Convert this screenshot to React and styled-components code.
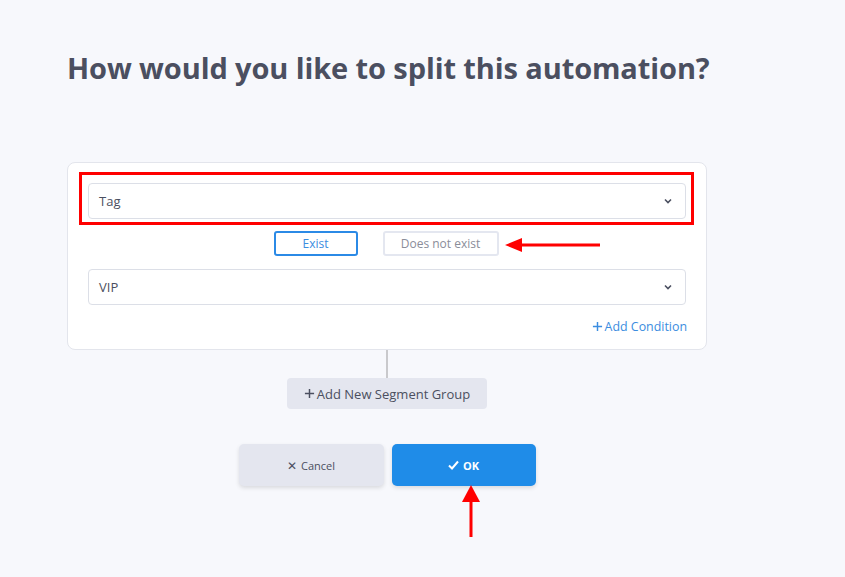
import React from "react";
import styled, { createGlobalStyle } from "styled-components";

const Global = createGlobalStyle`
  html, body { margin: 0; padding: 0; background: #f7f8fc; }
  body { font-family: "Open Sans", "Noto Sans", sans-serif; }
  * { box-sizing: border-box; }
`;

const Page = styled.div`
  position: relative;
  width: 845px;
  height: 577px;
  padding: 46px 0 0 67px;
  overflow: hidden;
`;

const Title = styled.h1`
  margin: 0;
  font-size: 29px;
  font-weight: 700;
  color: #4b4f60;
  line-height: 44px;
  letter-spacing: -0.1px;
`;

const Flow = styled.div`
  width: 640px;
  margin-top: 72px;
  display: flex;
  flex-direction: column;
  align-items: center;
`;

const Card = styled.div`
  width: 100%;
  background: #fff;
  border: 1px solid #e3e5ec;
  border-radius: 8px;
  padding: 20px 20px 14px 20px;
  display: flex;
  flex-direction: column;
`;

const SelectWrap = styled.div`
  position: relative;
`;

const Select = styled.div`
  height: 36px;
  border: 1px solid #dcdfe7;
  border-radius: 4px;
  background: #fff;
  display: flex;
  align-items: center;
  justify-content: space-between;
  padding: 0 12px 0 10px;
  font-size: 13px;
  color: #4b4f60;
`;

const Highlight = styled.div`
  position: absolute;
  left: -9px;
  right: -8px;
  top: -11px;
  bottom: -6px;
  border: 3px solid #f00;
  pointer-events: none;
`;

const ToggleRow = styled.div`
  display: flex;
  justify-content: center;
  gap: 25px;
  margin: 12px 0 13px 0;
  padding-right: 2px;
`;

const Toggle = styled.div`
  height: 25px;
  width: ${(p) => p.$w}px;
  border: ${(p) => (p.$active ? "2px solid #2b8ae6" : "2px solid #e4e7f0")};
  border-radius: 3px;
  color: ${(p) => (p.$active ? "#3b8de0" : "#8a8d99")};
  font-size: 12px;
  display: flex;
  align-items: center;
  justify-content: center;
  background: #fff;
`;

const ToggleAnchor = styled.div`
  position: relative;
`;

const LeftArrow = styled.svg`
  position: absolute;
  left: 122px;
  top: 5px;
`;

const AddCondition = styled.div`
  align-self: flex-end;
  margin-top: 13px;
  margin-right: -1px;
  font-size: 12.4px;
  color: #3b8de0;
  display: flex;
  align-items: center;
  gap: 2px;
`;

const Connector = styled.div`
  width: 2px;
  height: 28px;
  background: #c9c9cc;
`;

const SegmentButton = styled.div`
  width: 200px;
  height: 31px;
  background: #e4e6ef;
  border-radius: 4px;
  display: flex;
  align-items: center;
  justify-content: center;
  gap: 2px;
  font-size: 13px;
  color: #4b4f60;
`;

const Actions = styled.div`
  display: flex;
  gap: 8px;
  margin-top: 35px;
`;

const ActionButton = styled.div`
  position: relative;
  width: ${(p) => p.$w}px;
  height: 42px;
  border-radius: 5px;
  display: flex;
  align-items: center;
  justify-content: center;
  gap: 4px;
  font-size: 11px;
  font-weight: ${(p) => (p.$primary ? 700 : 400)};
  background: ${(p) => (p.$primary ? "#1f8ce8" : "#e4e6ef")};
  color: ${(p) => (p.$primary ? "#fff" : "#4b4f60")};
  box-shadow: 0 2px 4px rgba(0, 0, 0, 0.12);
`;

const UpArrow = styled.svg`
  position: absolute;
  left: 69px;
  top: 41px;
`;

const Chevron = () => (
  <svg width="10" height="8" viewBox="0 0 10 8">
    <path d="M2 2.5 L5 5.5 L8 2.5" fill="none" stroke="#4b4f60" strokeWidth="1.6" />
  </svg>
);

const Plus = ({ color, size = 11 }) => (
  <svg width={size} height={size} viewBox="0 0 12 12">
    <path d="M6 1 V11 M1 6 H11" stroke={color} strokeWidth="1.6" fill="none" />
  </svg>
);

export default function App() {
  return (
    <>
      <Global />
      <Page>
        <Title>How would you like to split this automation?</Title>
        <Flow>
          <Card>
            <SelectWrap>
              <Select>
                <span>Tag</span>
                <Chevron />
              </Select>
              <Highlight />
            </SelectWrap>
            <ToggleRow>
              <Toggle $active $w={84}>Exist</Toggle>
              <ToggleAnchor>
                <Toggle $w={116}>Does not exist</Toggle>
                <LeftArrow width="100" height="20" viewBox="0 0 100 20">
                  <polygon points="0,9 17,2 17,16" fill="#f00" />
                  <rect x="16" y="7.5" width="79" height="3" fill="#f00" />
                </LeftArrow>
              </ToggleAnchor>
            </ToggleRow>
            <Select>
              <span>VIP</span>
              <Chevron />
            </Select>
            <AddCondition>
              <Plus color="#3b8de0" />
              Add Condition
            </AddCondition>
          </Card>
          <Connector />
          <SegmentButton>
            <Plus color="#4b4f60" />
            Add New Segment Group
          </SegmentButton>
          <Actions>
            <ActionButton $w={145}>
              <span style={{ fontSize: 12 }}>✕</span>Cancel
            </ActionButton>
            <ActionButton $primary $w={144}>
              <svg width="11" height="10" viewBox="0 0 11 10">
                <path d="M1 5.5 L4 8.5 L10 1.5" fill="none" stroke="#fff" strokeWidth="2" />
              </svg>
              OK
              <UpArrow width="20" height="54" viewBox="0 0 20 54">
                <polygon points="10,0 1,17 19,17" fill="#f00" />
                <rect x="8.5" y="16" width="3" height="36" fill="#f00" />
              </UpArrow>
            </ActionButton>
          </Actions>
        </Flow>
      </Page>
    </>
  );
}
